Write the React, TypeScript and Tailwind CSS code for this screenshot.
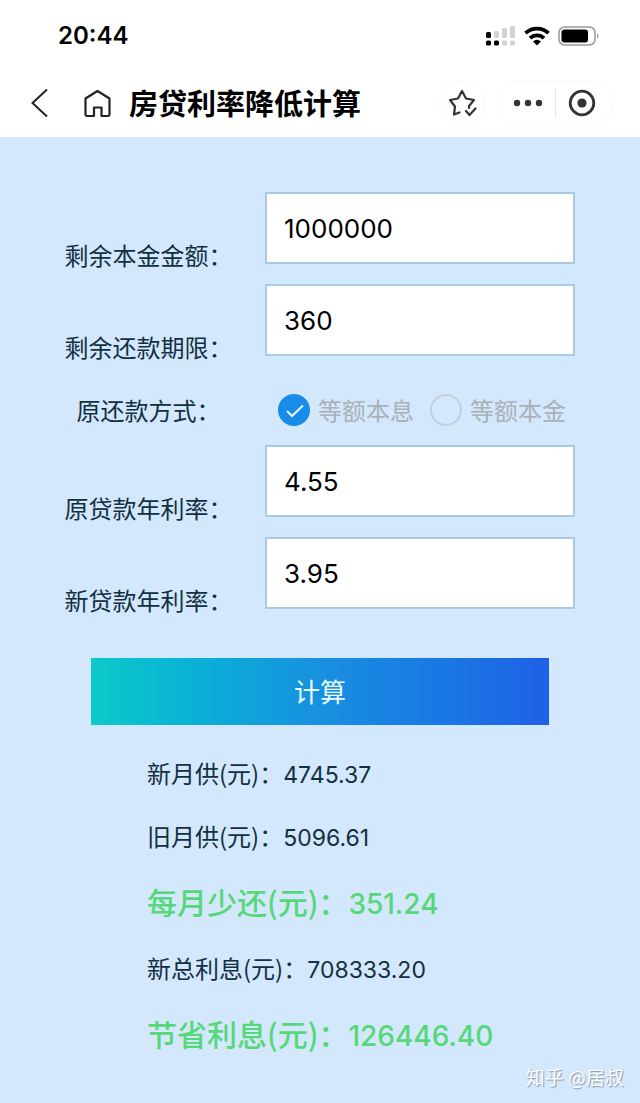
import React, { useState } from "react";
import clsx from "clsx";

const FIELDS = [
  { key: "principal", label: "剩余本金金额：" },
  { key: "months", label: "剩余还款期限：" },
  { key: "oldRate", label: "原贷款年利率：" },
  { key: "newRate", label: "新贷款年利率：" },
] as const;

type FieldKey = (typeof FIELDS)[number]["key"];
type FormValues = Record<FieldKey, string>;

const METHODS = ["等额本息", "等额本金"];

// fixed monthly payment, rounded to cents
function monthlyPayment(principal: number, months: number, yearRate: number) {
  const r = yearRate / 100 / 12;
  const pow = Math.pow(1 + r, months);
  return Math.round(((principal * r * pow) / (pow - 1)) * 100) / 100;
}

function calculate(v: FormValues) {
  const principal = Number(v.principal);
  const months = Number(v.months);
  const oldPay = monthlyPayment(principal, months, Number(v.oldRate));
  const newPay = monthlyPayment(principal, months, Number(v.newRate));
  return [
    { label: "新月供(元)：", value: newPay },
    { label: "旧月供(元)：", value: oldPay },
    { label: "每月少还(元)：", value: oldPay - newPay, highlight: true },
    { label: "新总利息(元)：", value: newPay * months - principal },
    { label: "节省利息(元)：", value: (oldPay - newPay) * months, highlight: true },
  ];
}

function StatusBar() {
  return (
    <div className="flex h-[72px] items-center justify-between pl-[58px] pr-10">
      <span className="font-['Inter',sans-serif] text-2xl font-semibold text-black">20:44</span>
      <div className="flex items-center gap-2">
        <svg width="30" height="22" viewBox="0 0 30 22" fill="#d2d2d2">
          <g fill="#000">
            <rect x="0" y="7" width="5" height="6" rx="1.5" />
            <rect x="0" y="15.5" width="5" height="5" rx="1.5" />
            <rect x="8" y="15.5" width="5" height="5" rx="1.5" />
          </g>
          <rect x="8" y="6" width="5" height="7" rx="1.5" />
          <rect x="16" y="3" width="5" height="10" rx="1.5" />
          <rect x="24" y="1" width="5" height="12" rx="1.5" />
          <rect x="16" y="15.5" width="5" height="5" rx="1.5" />
          <rect x="24" y="15.5" width="5" height="5" rx="1.5" />
        </svg>
        <svg width="26" height="20" viewBox="0 0 26 20" fill="none" stroke="#000" strokeWidth="3.8">
          <path d="M1.5 7.2a16.5 16.5 0 0 1 23 0" />
          <path d="M6 12.2a10 10 0 0 1 14 0" />
          <path d="M13 19.5l-4-4a5.7 5.7 0 0 1 8 0z" fill="#000" stroke="none" />
        </svg>
        <svg width="42" height="20" viewBox="0 0 42 20" fill="none">
          <rect x="1" y="1" width="36" height="18" rx="5.5" stroke="#999" strokeWidth="1.5" />
          <rect x="3.5" y="3.5" width="26.5" height="13" rx="3" fill="#000" />
          <path d="M39 7.5c2 .6 2 4.4 0 5z" fill="#999" />
        </svg>
      </div>
    </div>
  );
}

function NavBar() {
  return (
    <nav className="flex h-[65px] items-center pb-1 pl-[30px] pr-[26px]">
      <button aria-label="返回" className="cursor-pointer">
        <svg width="20" height="30" viewBox="0 0 20 30" fill="none" stroke="#222" strokeWidth="2">
          <path d="M17 1.5L2.5 15 17 28.5" />
        </svg>
      </button>
      <button aria-label="首页" className="ml-[33px] cursor-pointer">
        <svg width="30" height="30" viewBox="0 0 30 30" fill="none" stroke="#222" strokeWidth="2.2" strokeLinejoin="round">
          <path d="M2.5 10.5L14.5 3 26.5 10.5V26.5a1.5 1.5 0 0 1-1.5 1.500H18.500V19.500H11V28H4A1.500 1.500 0 0 1 2.500 26.500z" />
        </svg>
      </button>
      <h1 className="ml-4 flex-1 text-[29px] font-bold text-black">房贷利率降低计算</h1>
      <button
        aria-label="收藏"
        className="flex size-[46px] cursor-pointer items-center justify-center rounded-full border border-[#fafafa]"
      >
        <svg width="30" height="30" viewBox="0 0 30 30" fill="none" stroke="#333" strokeWidth="2.2" strokeLinejoin="round" strokeLinecap="round">
          <path d="M12.5 24.5L7 26.5 8 18.5 3 12 11 10.5 15 3 19 10.5 27 12 22 18V20" />
          <path d="M19 23L22.5 27 28.5 20.5" />
        </svg>
      </button>
      <div className="ml-3 flex h-[46px] w-[117px] items-center rounded-full border border-[#fafafa]">
        <button aria-label="更多" className="flex flex-1 cursor-pointer justify-end pr-3">
          <svg width="30" height="8" viewBox="0 0 30 8" fill="#333">
            <circle cx="4" cy="4" r="3.2" />
            <circle cx="15" cy="4" r="3.2" />
            <circle cx="26" cy="4" r="3.2" />
          </svg>
        </button>
        <span className="h-7 w-px bg-[#e5e5e5]" />
        <button aria-label="关闭" className="flex flex-1 cursor-pointer pl-3">
          <svg width="28" height="28" viewBox="0 0 28 28">
            <circle cx="14" cy="14" r="11.8" fill="none" stroke="#333" strokeWidth="2.8" />
            <circle cx="14" cy="14" r="4.6" fill="#333" />
          </svg>
        </button>
      </div>
    </nav>
  );
}

function App() {
  const [values, setValues] = useState<FormValues>({
    principal: "1000000",
    months: "360",
    oldRate: "4.55",
    newRate: "3.95",
  });
  const [method, setMethod] = useState(METHODS[0]);
  const [results, setResults] = useState(() => calculate(values));

  const handleSubmit = (e: React.FormEvent<HTMLFormElement>) => {
    e.preventDefault();
    setResults(calculate(values));
  };

  const renderField = ({ key, label }: (typeof FIELDS)[number]) => (
    <div key={key} className="flex h-[84px]">
      <label htmlFor={key} className="w-[233px] shrink-0 self-end text-center leading-[42px]">
        {label}
      </label>
      <input
        id={key}
        type="text"
        inputMode="decimal"
        value={values[key]}
        onChange={(e) => setValues({ ...values, [key]: e.target.value })}
        className="h-[72px] min-w-0 flex-1 border-2 border-[#a9c9e4] bg-white px-[17px] font-['Inter',sans-serif] text-[26px] text-black outline-none"
      />
    </div>
  );

  return (
    <div
      lang="zh-CN"
      className="relative flex min-h-screen flex-col bg-[#d3e7fd] font-['Noto_Sans_CJK_SC',sans-serif] text-2xl text-[#12303f]"
    >
      <header className="bg-white">
        <StatusBar />
        <NavBar />
      </header>

      <main className="pt-[55px]">
        <form onSubmit={handleSubmit}>
          <div className="flex flex-col gap-2 pl-8 pr-[65px]">
            {FIELDS.slice(0, 2).map(renderField)}

            <div role="radiogroup" aria-labelledby="method-label" className="flex h-[61px] items-center pt-1.5">
              <span id="method-label" className="w-[233px] shrink-0 text-center">
                原还款方式：
              </span>
              <div className="flex gap-4 pl-[13px] text-[#a9b0b6]">
                {METHODS.map((m) => (
                  <label key={m} className="flex items-center gap-2 whitespace-nowrap">
                    <span className="relative size-8">
                      <input
                        type="radio"
                        name="method"
                        checked={method === m}
                        onChange={() => setMethod(m)}
                        className="block size-8 appearance-none rounded-full border-2 border-[#c3cfd9] checked:border-[#188ce8] checked:bg-[#188ce8]"
                      />
                      {method === m && (
                        <svg className="pointer-events-none absolute inset-0" width="32" height="32" viewBox="0 0 32 32" fill="none" stroke="#e6f6ff" strokeWidth="2">
                          <path d="M9 17l5 5L25 11.5" />
                        </svg>
                      )}
                    </span>
                    {m}
                  </label>
                ))}
              </div>
            </div>

            {FIELDS.slice(2).map(renderField)}
          </div>

          <div className="px-[91px] pt-[37px]">
            <button
              type="submit"
              className="h-[67px] w-full cursor-pointer bg-linear-to-r from-[#0dcaca] via-[#1890e0] to-[#2060e6] text-[26px] text-[#e8fbff]"
            >
              计算
            </button>
          </div>
        </form>

        <dl className="pl-[147px] pt-4">
          {results.map((r) => (
            <div
              key={r.label}
              className={clsx(
                "flex items-baseline",
                r.highlight ? "h-[69px] leading-[69px] font-medium text-[#56d878]" : "h-[63px] leading-[63px]"
              )}
            >
              <dt className={clsx(r.highlight && "text-[30px]")}>{r.label}</dt>
              <dd className={clsx("font-['Inter',sans-serif]", r.highlight ? "text-[28px]" : "text-[23px]")}>
                {r.value.toFixed(2)}
              </dd>
            </div>
          ))}
        </dl>
      </main>

      <div className="absolute bottom-3 right-4 text-[19px] leading-7 text-white text-shadow-[1px_1px_1px_#8095a8]">
        知乎 @居叔
      </div>
    </div>
  );
}

export default App;
